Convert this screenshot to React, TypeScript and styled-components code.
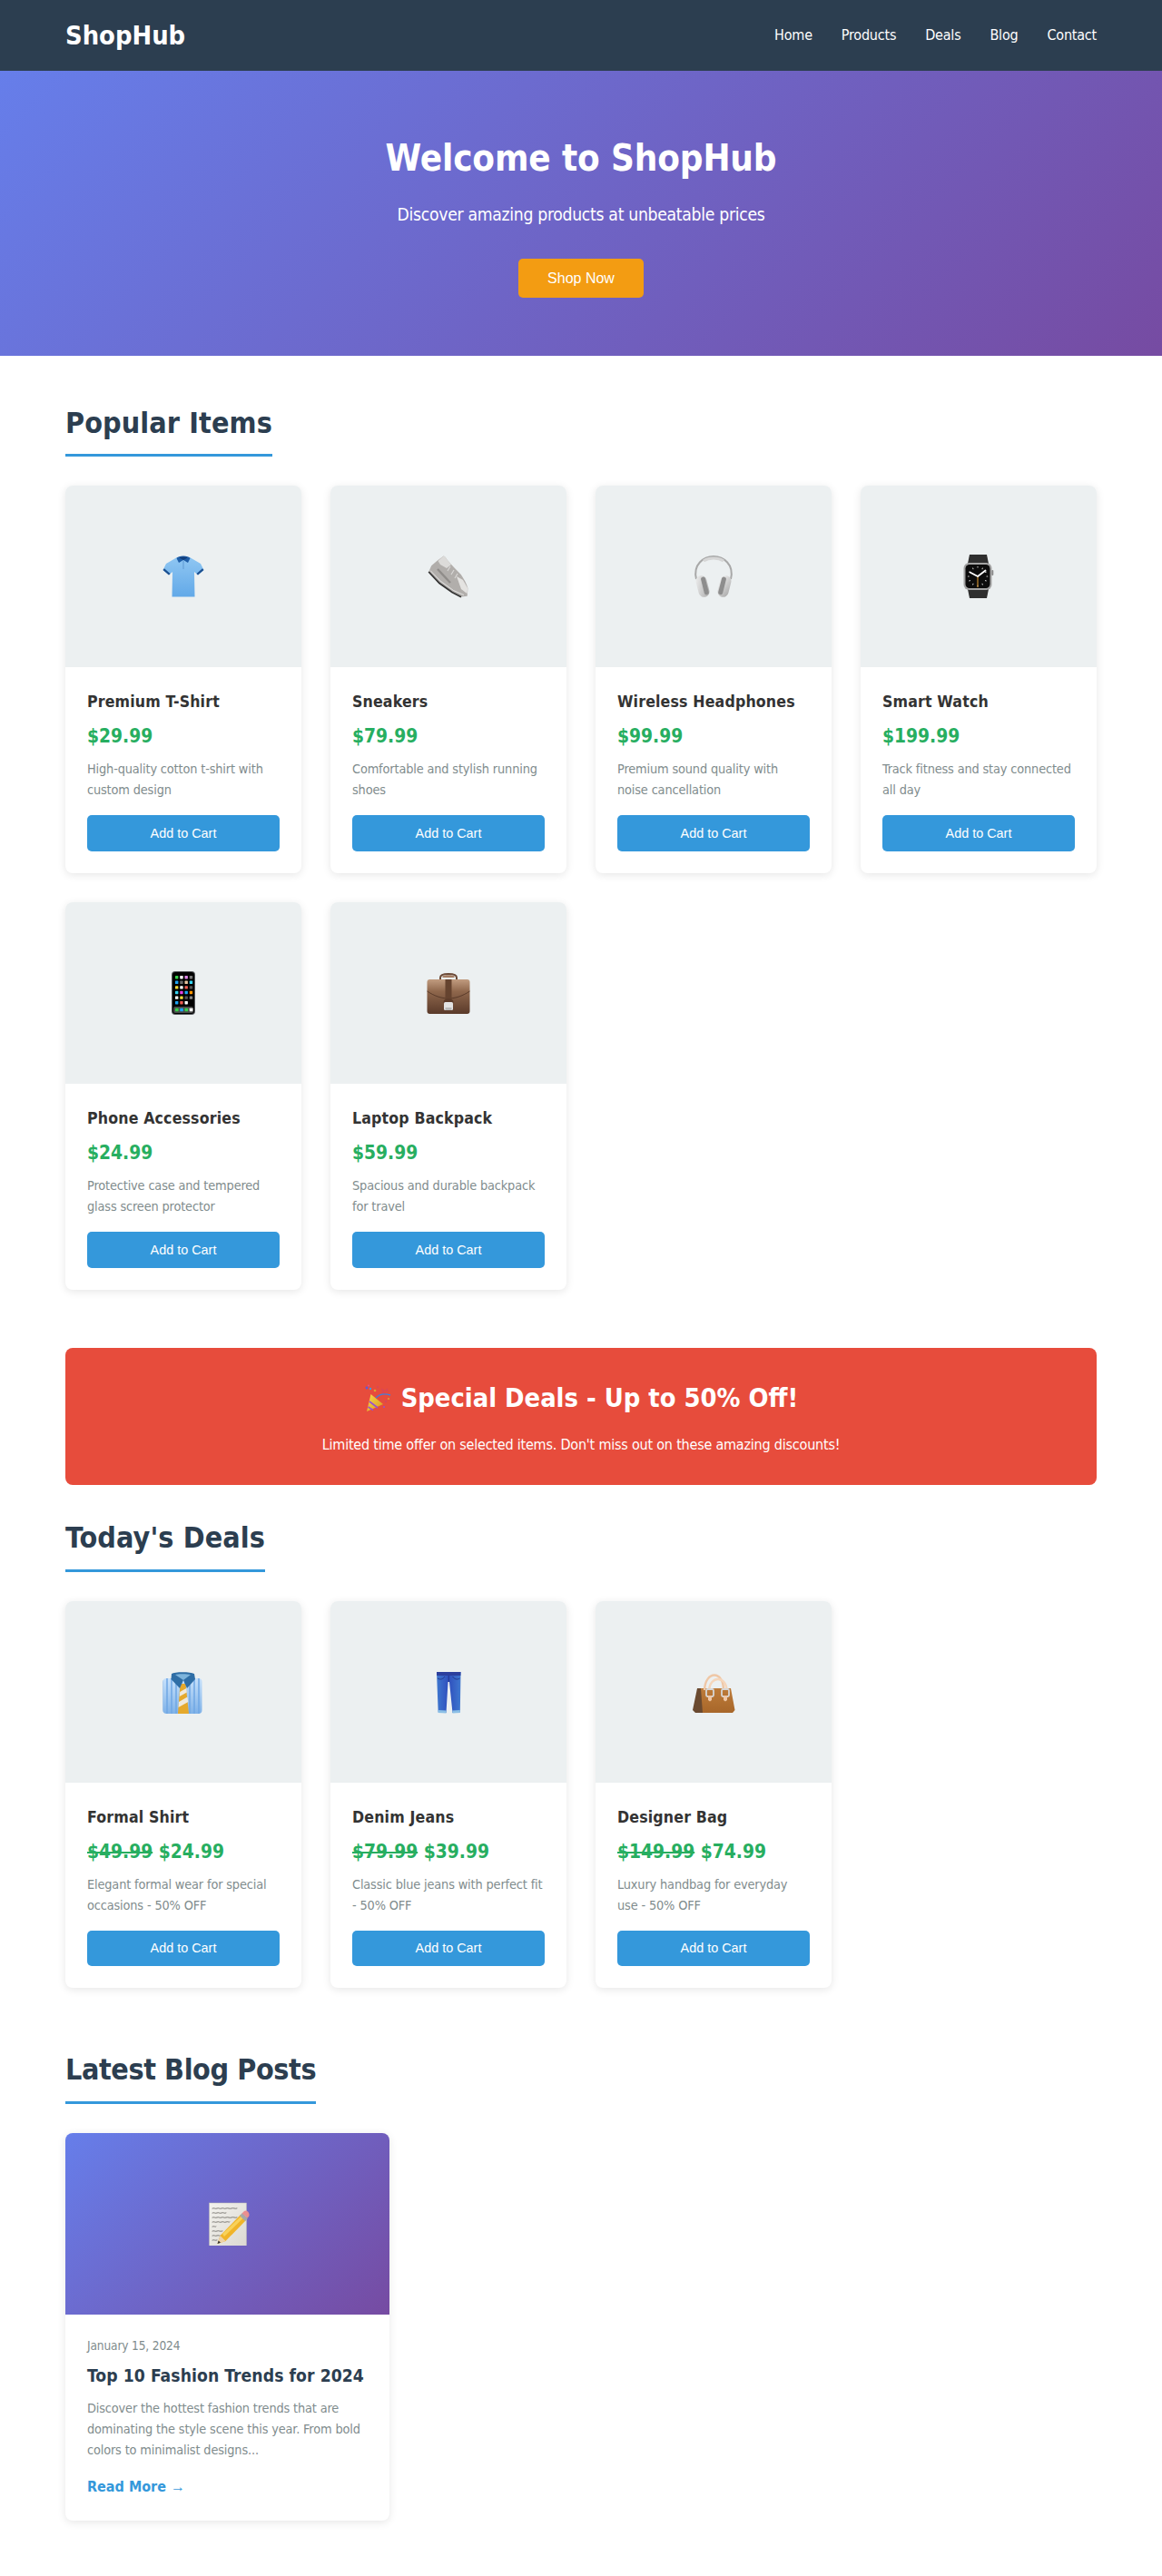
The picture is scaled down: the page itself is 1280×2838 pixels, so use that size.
import React from "react";
import styled, { createGlobalStyle } from "styled-components";

const Global = createGlobalStyle`
  * { margin: 0; padding: 0; box-sizing: border-box; }
  html, body { background: #fff; }
  body {
    font-family: "DejaVu Sans", Verdana, sans-serif;
    font-stretch: condensed;
    color: #333;
    line-height: 1.6;
  }
`;

const Nav = styled.nav`
  background: #2c3e50;
  padding: 16px 72px;
  display: flex;
  align-items: center;
  justify-content: space-between;
`;
const Logo = styled.div`
  font-size: 28.8px;
  font-weight: 700;
  color: #fff;
`;
const NavLinks = styled.ul`
  list-style: none;
  display: flex;
  gap: 32px;
`;
const NavLink = styled.a`
  color: #fff;
  font-size: 16px;
  letter-spacing: -0.013em;
  text-decoration: none;
`;

const Hero = styled.section`
  background: linear-gradient(135deg, #667eea 0%, #764ba2 100%);
  color: #fff;
  text-align: center;
  padding: 64px 32px;
`;
const HeroTitle = styled.h1`
  font-size: 40px;
  font-weight: 700;
  letter-spacing: -0.0036em;
  margin-bottom: 16px;
`;
const HeroText = styled.p`
  font-size: 19.2px;
  letter-spacing: -0.0156em;
  margin-bottom: 32px;
`;
const ShopButton = styled.button`
  display: inline-block;
  background: #f39c12;
  color: #fff;
  border: none;
  border-radius: 5px;
  padding: 12px 32px;
  font: 16px/19px "Liberation Sans", Arial, sans-serif;
  vertical-align: top;
`;

const Main = styled.main`
  padding: 48px 72px 0;
`;
const Section = styled.section`
  margin-bottom: 64px;
`;
const SectionTitle = styled.h2<{ $tracking?: string }>`
  width: fit-content;
  font-size: 32px;
  font-weight: 700;
  letter-spacing: ${(p) => p.$tracking ?? "0.003em"};
  color: #2c3e50;
  border-bottom: 3px solid #3498db;
  padding: 1px 0 8px;
  margin-bottom: 32px;
`;
const ProductGrid = styled.div`
  display: grid;
  grid-template-columns: repeat(auto-fill, minmax(250px, 1fr));
  gap: 32px;
`;
const Card = styled.article`
  background: #fff;
  border-radius: 8px;
  overflow: hidden;
  box-shadow: 0 2px 10px rgba(0, 0, 0, 0.1);
`;
const ProductImage = styled.div`
  height: 200px;
  background: #ecf0f1;
  display: flex;
  align-items: center;
  justify-content: center;
`;
const ProductInfo = styled.div`
  padding: 24px;
`;
const ProductName = styled.h3`
  font-size: 17.6px;
  font-weight: 700;
  letter-spacing: 0.0087em;
  color: #333;
  margin-bottom: 8px;
`;
const Price = styled.div`
  font-size: 20.8px;
  font-weight: 700;
  color: #27ae60;
  margin-bottom: 8px;
`;
const Description = styled.p`
  font-size: 14.4px;
  letter-spacing: -0.0105em;
  color: #7f8c8d;
  margin-bottom: 16px;
`;
const CartButton = styled.button`
  display: block;
  width: 100%;
  background: #3498db;
  color: #fff;
  border: none;
  border-radius: 5px;
  padding: 11.2px;
  font: 14.4px/17px "Liberation Sans", Arial, sans-serif;
`;

const Banner = styled.section`
  background: #e74c3c;
  color: #fff;
  text-align: center;
  border-radius: 8px;
  padding: 32px;
  margin-bottom: 32px;
`;
const BannerTitle = styled.h2`
  font-size: 28.8px;
  font-weight: 700;
  margin-bottom: 16px;
  svg {
    vertical-align: -7px;
  }
`;
const BannerText = styled.p`
  font-size: 16px;
  letter-spacing: -0.013em;
`;

const BlogGrid = styled.div`
  display: grid;
  grid-template-columns: repeat(auto-fill, minmax(350px, 1fr));
  gap: 32px;
`;
const BlogImage = styled.div`
  height: 200px;
  background: linear-gradient(135deg, #667eea 0%, #764ba2 100%);
  display: flex;
  align-items: center;
  justify-content: center;
`;
const BlogInfo = styled.div`
  padding: 24px;
`;
const BlogDate = styled.div`
  font-size: 13.6px;
  letter-spacing: -0.0105em;
  color: #7f8c8d;
  margin-bottom: 8px;
`;
const BlogTitle = styled.h3`
  font-size: 19.2px;
  font-weight: 700;
  letter-spacing: 0.003em;
  color: #2c3e50;
  margin-bottom: 8px;
`;
const BlogExcerpt = styled.p`
  font-size: 14.4px;
  letter-spacing: -0.0105em;
  color: #7f8c8d;
  margin-bottom: 16px;
`;
const ReadMore = styled.a`
  display: block;
  font-size: 16px;
  font-weight: 700;
  color: #3498db;
  text-decoration: none;
`;
const Arrow = styled.span`
  font-family: "Liberation Sans", Arial, sans-serif;
  font-weight: 400;
`;

const Icon = styled.svg`
  width: 48px;
  height: 48px;
  display: block;
  flex: none;
`;
const SmallIcon = styled.svg`
  width: 32px;
  height: 32px;
  display: inline-block;
`;

const Shirt = () => (
  <Icon viewBox="0 0 48 48">
    <defs>
      <linearGradient id="shirtBody" x1="0" y1="0" x2="0" y2="1">
        <stop offset="0" stopColor="#8fc6f2" />
        <stop offset="1" stopColor="#62a9e8" />
      </linearGradient>
    </defs>
    <path d="M17 3 5 10 1.5 17 8 22.5 12 19 11.5 46.5H36.5L36 19 40 22.5 46.5 17 43 10 31 3Z" fill="url(#shirtBody)" />
    <path d="M1.5 17 8 22.5 9.5 21 3 15.3ZM46.5 17 40 22.5 38.5 21 45 15.3Z" fill="#1b4f8f" />
    <path d="M16.5 4C18 .5 30 .5 31.5 4L29 9 24 6 19 9Z" fill="#1f5ea8" />
    <path d="M19.5 3.5C21 2.2 27 2.2 28.5 3.5L24 6Z" fill="#123f7d" />
    <path d="M24 6V16" stroke="#6ba6dc" strokeWidth="1.5" />
  </Icon>
);
const Sneaker = () => (
  <Icon viewBox="0 0 48 48">
    <path d="M18.6 1.5C20 2 21.5 3.5 22.5 5.7L30 14 37.8 22C41 27 44 32 45.4 37L44.7 45.7 38 46.5 28 41 14 31 2.2 19 5.2 12.3 11 7.3Z" fill="#b1aeab" />
    <path d="M18.6 1.5C20 2 21.5 3.5 22.5 5.7L27 11 22 15 15 11 12.5 7Z" fill="#dcdbd9" />
    <path d="M33 24 40 28 45.2 37 44.5 43 38 38Z" fill="#e4e3e1" />
    <path d="M12 16 26 31" stroke="#8f8c89" strokeWidth="2.4" />
    <path d="M26 13 23 18M30 17 27 22M34 21 31 26" stroke="#d8d7d5" strokeWidth="1.2" />
    <path d="M2.2 19 14 31.5 28 41.5 38 46.8" stroke="#343434" strokeWidth="1.8" fill="none" />
    <path d="M4 17.5 15 29 29.5 39.5 41 44.5" stroke="#e8e8e8" strokeWidth="0.9" fill="none" />
  </Icon>
);
const Headphones = () => (
  <Icon viewBox="0 0 48 48">
    <defs>
      <linearGradient id="cup" x1="0" y1="0" x2="1" y2="1">
        <stop offset="0" stopColor="#f0f0f0" />
        <stop offset="1" stopColor="#a9a9a9" />
      </linearGradient>
    </defs>
    <path d="M5 27C1 11 13 2 24 2S47 11 43 27" fill="none" stroke="#a8a8a8" strokeWidth="2" />
    <path d="M13 7C19 3 29 3 35 7" fill="none" stroke="#d6d6d6" strokeWidth="3" />
    <g transform="rotate(-14 12 35)">
      <rect x="6" y="23" width="12" height="24" rx="6" fill="url(#cup)" />
      <rect x="12" y="25" width="5" height="20" rx="2.5" fill="#8d8d8d" />
    </g>
    <g transform="rotate(14 36 35)">
      <rect x="30" y="23" width="12" height="24" rx="6" fill="url(#cup)" />
      <rect x="31" y="25" width="5" height="20" rx="2.5" fill="#8d8d8d" />
    </g>
  </Icon>
);
const Watch = () => (
  <Icon viewBox="0 0 48 48">
    <path d="M14 0H33L35 10V38L33 48H14L12 38V10Z" fill="#2f2f2f" />
    <rect x="7.5" y="9" width="31" height="30" rx="6" fill="#a3a3a3" />
    <rect x="9.5" y="11" width="27" height="26" rx="4.5" fill="#0c0c0c" />
    <rect x="38.3" y="17" width="2" height="6" rx="1" fill="#8a8a8a" />
    <g stroke="#c9c9c9" strokeWidth="1.1" strokeLinecap="round">
      <path d="M23 13.2v.8M23 34v.8M12.4 24h.8M33 24h.8M17.6 15l.4.7M28.4 15l-.4.7M13.8 19l.7.4M32.2 19l-.7.4M13.8 29l.7-.4M32.2 29l-.7-.4M17.6 33l.4-.7M28.4 33l-.4-.7" />
    </g>
    <path d="M23 24V36" stroke="#c78a2c" strokeWidth="1.2" />
    <path d="M23 24 14.5 19.5M23 24 31.5 17.5" stroke="#fff" strokeWidth="1.8" strokeLinecap="round" />
  </Icon>
);
const PHONE_APPS = [
  ["#37d04b", "#ffffff", "#e086e8", "#777777"],
  ["#1ea4f4", "#666666", "#e8c39e", "#35d4f2"],
  ["#f4dc3a", "#ffffff", "#ee5a50", "#555555"],
  ["#35d4f2", "#e23fe0", "#1ea4f4", "#ff9500"],
  ["#ffffff", "#f4dc3a", "#555555", "#888888"],
  ["#1ea4f4", "#ee5a50", "#ffffff", "#000000"],
];
const Phone = () => (
  <Icon viewBox="0 0 48 48">
    <rect x="11" y="0" width="26" height="48" rx="4" fill="#55585c" />
    <rect x="12" y="1" width="24" height="46" rx="3.2" fill="#000" />
    {PHONE_APPS.map((row, r) =>
      row.map((c, i) => (
        <rect key={`${r}-${i}`} x={15 + i * 5.25} y={5 + r * 5.6} width="3.4" height="3.4" rx="0.6" fill={c} />
      ))
    )}
    <rect x="13" y="39" width="22" height="7" rx="2" fill="#4a4a4a" />
    {["#37d04b", "#1ea4f4", "#37d04b", "#ffffff"].map((c, i) => (
      <rect key={c + i} x={15 + i * 5.25} y="40.7" width="3.6" height="3.6" rx="0.6" fill={c} />
    ))}
  </Icon>
);
const Briefcase = () => (
  <Icon viewBox="0 0 48 48">
    <defs>
      <linearGradient id="caseBody" x1="0" y1="0" x2="0" y2="1">
        <stop offset="0" stopColor="#c19c80" />
        <stop offset="0.35" stopColor="#8f674c" />
        <stop offset="1" stopColor="#5a3a2a" />
      </linearGradient>
    </defs>
    <path d="M15 11V7C15 4 18 3 24 3S33 4 33 7V11" fill="none" stroke="#6b4a38" strokeWidth="2" />
    <path d="M17 6C18 3.8 30 3.8 31 6L30 7H18Z" fill="#a47c62" />
    <rect x="0.5" y="9" width="47" height="38" rx="3" fill="url(#caseBody)" />
    <path d="M.5 22C8 27 16 30 24 30S40 27 47.5 22" fill="none" stroke="#4f3223" strokeWidth="0.8" />
    <path d="M20.5 9H27.5V31H20.5Z" fill="#65432f" />
    <path d="M18.5 34C18.5 29 29.5 29 29.5 34V35H18.5Z" fill="#5c3b2a" />
    <rect x="19" y="34" width="10" height="9" rx="1.5" fill="#e3e3e3" />
    <rect x="20.5" y="40" width="7" height="3" fill="#b9b9b9" />
  </Icon>
);
const FormalShirt = () => (
  <Icon viewBox="0 0 48 48">
    <defs>
      <linearGradient id="fsBody" x1="0" y1="0" x2="0" y2="1">
        <stop offset="0" stopColor="#c7e1fb" />
        <stop offset="1" stopColor="#7fb2e8" />
      </linearGradient>
      <pattern id="fsStripe" width="5" height="8" patternUnits="userSpaceOnUse">
        <rect width="2" height="8" fill="#6fa6e4" opacity="0.75" />
      </pattern>
    </defs>
    <rect x="1.5" y="9" width="43" height="39" rx="4" fill="url(#fsBody)" />
    <rect x="1.5" y="9" width="43" height="39" rx="4" fill="url(#fsStripe)" />
    <path d="M20.5 15H26.5L30 48H18Z" fill="#e5a92c" />
    <path d="M19 35 28.5 29.5 29.3 35 18.5 41ZM20.2 24 27.2 20 27.8 24.5 19.8 29Z" fill="#efe9dc" />
    <path d="M11 4C14 1.5 32 1.5 36 4L37 10 28 20 24 11 20 20 10.5 10Z" fill="#2f6ea6" />
    <path d="M15 5C18 4 28 4 32 5L24 11Z" fill="#7db4dc" />
  </Icon>
);
const Jeans = () => (
  <Icon viewBox="0 0 48 48">
    <defs>
      <linearGradient id="jeansBody" x1="0" y1="0" x2="1" y2="0">
        <stop offset="0" stopColor="#3f78cf" />
        <stop offset="0.5" stopColor="#2f4fbd" />
        <stop offset="1" stopColor="#3f78cf" />
      </linearGradient>
    </defs>
    <path d="M11 2H37.5L36.8 46.5 28.5 47 25 13H23.5L21.5 47 12.7 46.5Z" fill="url(#jeansBody)" />
    <path d="M11 2H37.5L37.4 6H11.1Z" fill="#2c3f9d" />
    <path d="M12.6 44 21.6 44.5 21.5 47.5 12.7 47ZM28.3 44.5 36.8 44 36.8 47 28.5 47.5Z" fill="#8cc0e6" />
    <path d="M12 9C15 11 18 10 20 7M36.5 9C33.5 11 30.5 10 28.5 7M24.3 6V13" stroke="#1e2f80" strokeWidth="0.8" fill="none" />
  </Icon>
);
const Bag = () => (
  <Icon viewBox="0 0 48 48">
    <defs>
      <linearGradient id="bagBody" x1="0" y1="0" x2="0" y2="1">
        <stop offset="0" stopColor="#bd7b39" />
        <stop offset="1" stopColor="#a8672a" />
      </linearGradient>
    </defs>
    <path d="M6 20 1 44 4 47H12V20Z" fill="#6a4a30" />
    <path d="M10 20H43L47.5 44 45 47H12Z" fill="url(#bagBody)" />
    <path d="M14 22C15 0 35 0 35 22" fill="none" stroke="#efc7a6" strokeWidth="2.4" />
    <path d="M19 22C20 6 38 6 38.5 22" fill="none" stroke="#f5d6bb" strokeWidth="2.4" />
    <rect x="16" y="21" width="8" height="8" rx="1.5" fill="none" stroke="#d6d6d6" strokeWidth="1.8" />
    <rect x="33" y="21" width="8" height="8" rx="1.5" fill="none" stroke="#d6d6d6" strokeWidth="1.8" />
    <path d="M18 28H22V33L20 34.5 18 33ZM35 28H39V33L37 34.5 35 33Z" fill="#efc7a6" />
  </Icon>
);
const Memo = () => (
  <Icon viewBox="0 0 48 48">
    <defs>
      <linearGradient id="memoPaper" x1="0" y1="0" x2="1" y2="1">
        <stop offset="0" stopColor="#f3f2ee" />
        <stop offset="1" stopColor="#dbd9d2" />
      </linearGradient>
    </defs>
    <rect x="3.5" y="1" width="41" height="47.5" fill="url(#memoPaper)" stroke="#bdbbb4" strokeWidth="0.5" />
    <g stroke="#55524c" strokeWidth="0.7" fill="none" strokeLinecap="round">
      <path d="M7 7c2-1 3 1 5 0s3 1 5 0 3 1 5 0 4 1 6 0 4 1 6 0" />
      <path d="M7 12c2-1 3 1 5 0s3 1 5 0 3 1 5 0" />
      <path d="M7 17c2-1 3 1 5 0s3 1 5 0 3 1 5 0 4 1 6 0 4 1 6 0" />
      <path d="M7 22c2-1 3 1 5 0s3 1 5 0 3 1 5 0 4 1 4 0" />
      <path d="M7 27c2-1 3 1 4 0" />
      <path d="M7 32c2-1 3 1 5 0s3 1 6 0" />
      <path d="M7 37c2-1 3 1 5 0s2 1 5 0" />
      <path d="M7 42c2-1 3 1 5 0" />
    </g>
    <path d="M12.5 46 15.5 37 38 14 44 20 21.5 43Z" fill="#f0b429" />
    <path d="M18 35 40 14.5 42 16.5 20 38Z" fill="#f8d25a" />
    <path d="M12.5 46 15.5 37 21.5 43Z" fill="#edd3a8" />
    <path d="M12.5 46 13.7 42.5 16 44.8Z" fill="#333" />
    <path d="M37 15 40 12 46 18 43 21Z" fill="#a8a8a8" />
    <path d="M39.5 12.5 42 10C43.5 9 45.5 9.5 46.5 11 47.5 12.5 48 14.5 47 16L45.5 17.5Z" fill="#ea8f8f" />
  </Icon>
);
const Popper = () => (
  <SmallIcon viewBox="0 0 32 32">
    <defs>
      <linearGradient id="popCone" x1="0" y1="0" x2="1" y2="1">
        <stop offset="0" stopColor="#f8d84a" />
        <stop offset="1" stopColor="#d99a1e" />
      </linearGradient>
    </defs>
    <path d="M3 30 7.5 11 21 22Z" fill="url(#popCone)" />
    <path d="M6 19 15 26M4.5 25 10 28.5" stroke="#9a4fd0" strokeWidth="1.6" />
    <path d="M13 15C17 11 23 10 29 12" fill="none" stroke="#3f7fe0" strokeWidth="1.4" />
    <path d="M19 5 22 7 20 9 24 10M26 5 24 7 27 8" fill="none" stroke="#d8455a" strokeWidth="1.2" />
    <circle cx="3" cy="4" r="1.4" fill="#5a5ae0" />
    <circle cx="7" cy="5" r="1.2" fill="#3f9fe0" />
    <circle cx="5" cy="1.5" r="1" fill="#e2508a" />
    <circle cx="12" cy="7" r="1.3" fill="#e0a030" />
    <circle cx="15" cy="3" r="1" fill="#d8455a" />
    <circle cx="24" cy="19" r="1.2" fill="#d8455a" />
    <circle cx="27" cy="16" r="1" fill="#e0a030" />
    <circle cx="22" cy="25" r="1" fill="#9a4fd0" />
  </SmallIcon>
);

const PRODUCTS = [
  { name: "Premium T-Shirt", price: "$29.99", text: "High-quality cotton t-shirt with custom design", Art: Shirt },
  { name: "Sneakers", price: "$79.99", text: "Comfortable and stylish running shoes", Art: Sneaker },
  { name: "Wireless Headphones", price: "$99.99", text: "Premium sound quality with noise cancellation", Art: Headphones },
  { name: "Smart Watch", price: "$199.99", text: "Track fitness and stay connected all day", Art: Watch },
  { name: "Phone Accessories", price: "$24.99", text: "Protective case and tempered glass screen protector", Art: Phone },
  { name: "Laptop Backpack", price: "$59.99", text: "Spacious and durable backpack for travel", Art: Briefcase },
];
const DEALS = [
  { name: "Formal Shirt", was: "$49.99", price: "$24.99", text: "Elegant formal wear for special occasions - 50% OFF", Art: FormalShirt },
  { name: "Denim Jeans", was: "$79.99", price: "$39.99", text: "Classic blue jeans with perfect fit - 50% OFF", Art: Jeans },
  { name: "Designer Bag", was: "$149.99", price: "$74.99", text: "Luxury handbag for everyday use - 50% OFF", Art: Bag },
];

type ProductProps = { name: string; price: string; was?: string; text: string; Art: React.ComponentType };
const Product = ({ name, price, was, text, Art }: ProductProps) => (
  <Card>
    <ProductImage>
      <Art />
    </ProductImage>
    <ProductInfo>
      <ProductName>{name}</ProductName>
      <Price>
        {was && <s>{was}</s>}
        {was && " "}
        {price}
      </Price>
      <Description>{text}</Description>
      <CartButton>Add to Cart</CartButton>
    </ProductInfo>
  </Card>
);

export default function App() {
  return (
    <>
      <Global />
      <Nav>
        <Logo>ShopHub</Logo>
        <NavLinks>
          {["Home", "Products", "Deals", "Blog", "Contact"].map((l) => (
            <li key={l}>
              <NavLink href="#">{l}</NavLink>
            </li>
          ))}
        </NavLinks>
      </Nav>
      <Hero>
        <HeroTitle>Welcome to ShopHub</HeroTitle>
        <HeroText>Discover amazing products at unbeatable prices</HeroText>
        <ShopButton>Shop Now</ShopButton>
      </Hero>
      <Main>
        <Section>
          <SectionTitle>Popular Items</SectionTitle>
          <ProductGrid>
            {PRODUCTS.map((p) => (
              <Product key={p.name} {...p} />
            ))}
          </ProductGrid>
        </Section>
        <Banner>
          <BannerTitle>
            <Popper /> Special Deals - Up to 50% Off!
          </BannerTitle>
          <BannerText>Limited time offer on selected items. Don't miss out on these amazing discounts!</BannerText>
        </Banner>
        <Section>
          <SectionTitle>Today's Deals</SectionTitle>
          <ProductGrid>
            {DEALS.map((p) => (
              <Product key={p.name} {...p} />
            ))}
          </ProductGrid>
        </Section>
        <Section>
          <SectionTitle $tracking="-0.0128em">Latest Blog Posts</SectionTitle>
          <BlogGrid>
            <Card>
              <BlogImage>
                <Memo />
              </BlogImage>
              <BlogInfo>
                <BlogDate>January 15, 2024</BlogDate>
                <BlogTitle>Top 10 Fashion Trends for 2024</BlogTitle>
                <BlogExcerpt>
                  Discover the hottest fashion trends that are dominating the style scene this year. From bold colors to
                  minimalist designs...
                </BlogExcerpt>
                <ReadMore href="#">
                  Read More <Arrow>→</Arrow>
                </ReadMore>
              </BlogInfo>
            </Card>
          </BlogGrid>
        </Section>
      </Main>
    </>
  );
}
